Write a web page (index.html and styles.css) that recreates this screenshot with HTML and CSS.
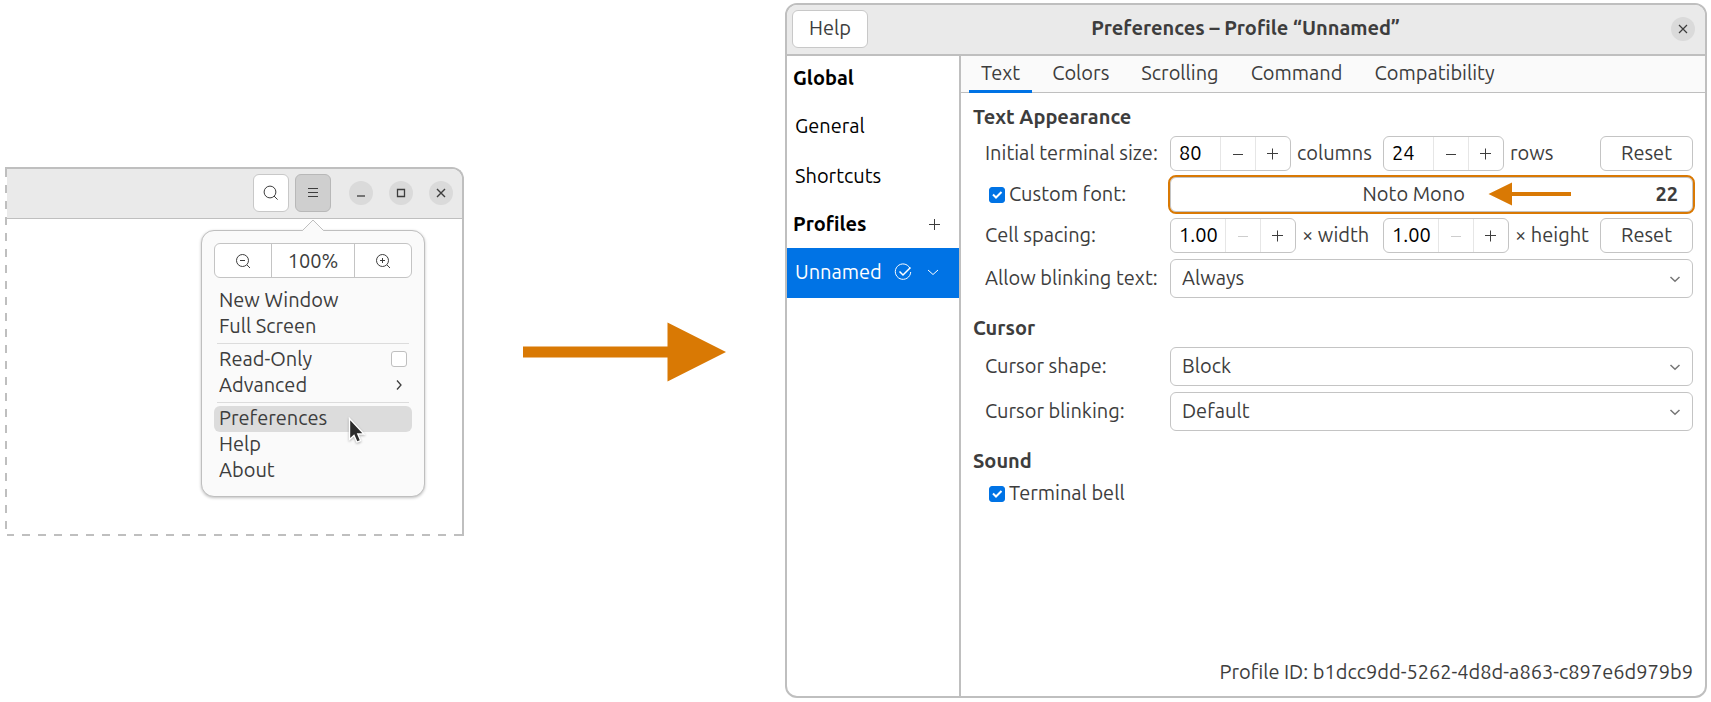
FILE: index.html
```html
<!DOCTYPE html>
<html lang="en">
<head>
<meta charset="utf-8">
<title>Terminal preferences</title>
<link rel="stylesheet" href="styles.css">
</head>
<body>
<main class="scene">
  <section class="terminal" aria-label="Terminal window">
    <header class="terminal-bar">
      <button class="tool" aria-label="Search">
        <svg width="16" height="16" viewBox="0 0 16 16"><circle cx="7" cy="7" r="5.9"/><path d="M11 11l3.6 3.6"/></svg>
      </button>
      <div class="menu-anchor">
        <button class="tool tool-active" aria-label="Menu">
          <svg width="16" height="16" viewBox="0 0 16 16"><path d="M3 3.5h10M3 7.5h10M3 11.5h10"/></svg>
        </button>
        <div class="popover">
          <svg class="popover-tip" width="24" height="13" viewBox="0 0 24 13"><path d="M1 12L12 1.5L23 12V13H1z" fill="#fafafa" stroke="none"/><path d="M0.5 11.5H1.5L12 1L22.5 11.5H23.5" stroke="#bfbfbf"/></svg>
          <div class="zoom">
            <button class="zoom-step" aria-label="Zoom out">
              <svg width="16" height="16" viewBox="0 0 16 16"><circle cx="7.5" cy="7.5" r="6"/><path d="M5 7.5h5M12 12l3 3"/></svg>
            </button>
            <button class="zoom-value">100%</button>
            <button class="zoom-step" aria-label="Zoom in">
              <svg width="16" height="16" viewBox="0 0 16 16"><circle cx="7.5" cy="7.5" r="6"/><path d="M5 7.5h5M7.5 5v5M12 12l3 3"/></svg>
            </button>
          </div>
          <button class="entry">New Window</button>
          <button class="entry">Full Screen</button>
          <hr class="rule">
          <label class="entry" for="read-only">Read-Only <input class="tick" type="checkbox" id="read-only"></label>
          <button class="entry">Advanced
            <svg class="entry-arrow" width="16" height="16" viewBox="0 0 16 16"><path d="M6 3.5L10 8L6 12.5"/></svg>
          </button>
          <hr class="rule">
          <button class="entry entry-hover">Preferences</button>
          <button class="entry">Help</button>
          <button class="entry">About</button>
          <svg class="pointer" width="18" height="28" viewBox="0 0 18 28"><path d="M1.5 1.5V22.5L6 18.5L9 25.2L12.6 23.6L9.8 17H16z" fill="#2b2b2b" stroke="#fff" stroke-width="1.4"/></svg>
        </div>
      </div>
      <div class="window-buttons">
        <button class="round" aria-label="Minimize"><svg width="12" height="12" viewBox="0 0 12 12"><path d="M2 9h8" stroke-width="1.3"/></svg></button>
        <button class="round" aria-label="Maximize"><svg width="12" height="12" viewBox="0 0 12 12"><path d="M2.5 2.5h7v7h-7z" stroke-width="1.3"/></svg></button>
        <button class="round" aria-label="Close"><svg width="12" height="12" viewBox="0 0 12 12"><path d="M2 2l8 8M10 2l-8 8" stroke-width="1.4"/></svg></button>
      </div>
    </header>
  </section>

  <svg class="big-arrow" width="204" height="60" viewBox="0 0 204 60"><path d="M0 24.5H144.500V0.500L203 30L144.500 59.500V35.500H0z" fill="#d97904" stroke="none"/></svg>

  <section class="prefs" aria-label="Preferences">
    <header class="prefs-bar">
      <button class="help">Help</button>
      <h1 class="title">Preferences – Profile “Unnamed”</h1>
      <button class="round" aria-label="Close"><svg width="12" height="12" viewBox="0 0 12 12"><path d="M2 2l8 8M10 2l-8 8" stroke-width="1.2"/></svg></button>
    </header>
    <div class="prefs-body">
      <nav class="side">
        <h2 class="side-head">Global</h2>
        <button class="side-item">General</button>
        <button class="side-item">Shortcuts</button>
        <div class="side-head side-profiles"><h2 class="side-title">Profiles</h2>
          <button class="bare" aria-label="Add profile"><svg width="16" height="16" viewBox="0 0 16 16"><path d="M8.500 3v11M3 8.500h11"/></svg></button>
        </div>
        <div class="side-item side-selected">
          <span>Unnamed</span>
          <svg width="18" height="18" viewBox="0 0 18 18"><path d="M15.900 5.200A7.700 7.700 0 1 0 16.700 9"/><path d="M5.500 8.500L9 12L16.500 4.500" stroke-width="1.500"/></svg>
          <button class="bare side-more" aria-label="Profile menu"><svg width="16" height="16" viewBox="0 0 16 16"><path d="M3 6l5 4.500L13 6"/></svg></button>
        </div>
      </nav>
      <div class="panel">
        <div class="tabs" role="tablist">
          <button class="tab tab-on" role="tab" aria-selected="true">Text</button>
          <button class="tab" role="tab">Colors</button>
          <button class="tab" role="tab">Scrolling</button>
          <button class="tab" role="tab">Command</button>
          <button class="tab" role="tab">Compatibility</button>
        </div>
        <div class="page">
          <h2 class="group">Text Appearance</h2>
          <div class="row">
            <label class="name" for="cols">Initial terminal size:</label>
            <div class="sizes">
              <div class="pair">
                <div class="spin"><input class="num" id="cols" type="text" inputmode="numeric" value="80"><button class="step" aria-label="Fewer columns"><svg width="16" height="16" viewBox="0 0 16 16"><path d="M3 8.500h10"/></svg></button><button class="step" aria-label="More columns"><svg width="16" height="16" viewBox="0 0 16 16"><path d="M7.500 2.500v11M2 7.500h11"/></svg></button></div>
                <label class="unit" for="cols">columns</label>
              </div>
              <div class="pair">
                <div class="spin"><input class="num" id="rows" type="text" inputmode="numeric" value="24"><button class="step" aria-label="Fewer rows"><svg width="16" height="16" viewBox="0 0 16 16"><path d="M3 8.500h10"/></svg></button><button class="step" aria-label="More rows"><svg width="16" height="16" viewBox="0 0 16 16"><path d="M7.500 2.500v11M2 7.500h11"/></svg></button></div>
                <label class="unit" for="rows">rows</label>
              </div>
              <button class="reset">Reset</button>
            </div>
          </div>
          <div class="row">
            <label class="name check" for="custom"><span class="box"><input class="tick" type="checkbox" id="custom" checked><svg class="mark" width="16" height="16" viewBox="0 0 16 16"><path d="M4 7.500L7 10.500L12.500 5"/></svg></span><span class="unit">Custom font:</span></label>
            <button class="font-button">
              <span class="font-name">Noto Mono<svg class="small-arrow" width="84" height="24" viewBox="0 0 84 24"><path d="M0.500 12L24 0.500V10H83V14H24V23.500z" fill="#d97904" stroke="none"/></svg></span>
              <b class="font-size">22</b>
            </button>
          </div>
          <div class="row">
            <label class="name" for="cellw">Cell spacing:</label>
            <div class="sizes">
              <div class="pair">
                <div class="spin"><input class="num num-wide" id="cellw" type="text" inputmode="decimal" value="1.00"><button class="step" disabled aria-label="Narrower"><svg width="16" height="16" viewBox="0 0 16 16"><path d="M3 8.500h10"/></svg></button><button class="step" aria-label="Wider"><svg width="16" height="16" viewBox="0 0 16 16"><path d="M7.500 2.500v11M2 7.500h11"/></svg></button></div>
                <label class="unit" for="cellw">× width</label>
              </div>
              <div class="pair">
                <div class="spin"><input class="num num-wide" id="cellh" type="text" inputmode="decimal" value="1.00"><button class="step" disabled aria-label="Shorter"><svg width="16" height="16" viewBox="0 0 16 16"><path d="M3 8.500h10"/></svg></button><button class="step" aria-label="Taller"><svg width="16" height="16" viewBox="0 0 16 16"><path d="M7.500 2.500v11M2 7.500h11"/></svg></button></div>
                <label class="unit" for="cellh">× height</label>
              </div>
              <button class="reset">Reset</button>
            </div>
          </div>
          <div class="row">
            <label class="name" for="blinktext">Allow blinking text:</label>
            <div class="combo"><select class="choice" id="blinktext"><option>Always</option></select><svg class="combo-arrow" width="16" height="16" viewBox="0 0 16 16"><path d="M3.500 6L8 10.300L12.500 6"/></svg></div>
          </div>
          <h2 class="group">Cursor</h2>
          <div class="row">
            <label class="name" for="shape">Cursor shape:</label>
            <div class="combo"><select class="choice" id="shape"><option>Block</option></select><svg class="combo-arrow" width="16" height="16" viewBox="0 0 16 16"><path d="M3.500 6L8 10.300L12.500 6"/></svg></div>
          </div>
          <div class="row">
            <label class="name" for="blink">Cursor blinking:</label>
            <div class="combo"><select class="choice" id="blink"><option>Default</option></select><svg class="combo-arrow" width="16" height="16" viewBox="0 0 16 16"><path d="M3.500 6L8 10.300L12.500 6"/></svg></div>
          </div>
          <h2 class="group">Sound</h2>
          <div class="row">
            <label class="name check" for="bell"><span class="box"><input class="tick" type="checkbox" id="bell" checked><svg class="mark" width="16" height="16" viewBox="0 0 16 16"><path d="M4 7.500L7 10.500L12.500 5"/></svg></span><span class="unit">Terminal bell</span></label>
          </div>
          <p class="profile-id">Profile ID: b1dcc9dd-5262-4d8d-a863-c897e6d979b9</p>
        </div>
      </div>
    </div>
  </section>
</main>
</body>
</html>
```

FILE: styles.css
```css
* { box-sizing: border-box; }

body {
  margin: 0;
  background: #fff;
  color: #3d3d3d;
  font-family: Ubuntu, "Noto Sans", sans-serif;
  font-size: 20px;
  line-height: 26px;
}

button, input, select {
  margin: 0;
  padding: 0;
  border: 0;
  background: none;
  color: inherit;
  font: inherit;
}

svg { display: block; flex: none; fill: none; stroke: #3d3d3d; }
h1, h2, p { margin: 0; font-size: inherit; }

.scene {
  display: grid;
  grid-template-columns: 459fr 321fr 922fr;
  align-items: center;
  min-height: 100vh;
  padding: 3px 4px 4px 5px;
}

/* Terminal window */
.terminal {
  min-height: 369px;
  margin-top: 2px;
  padding-left: 2px;
  border: 2px solid #bfbfbf;
  border-width: 2px 2px 0 0;
  border-radius: 0 12px 0 0;
  background:
    repeating-linear-gradient(to bottom, #bfbfbf 0 8px, #fff 8px 16px) left top / 2px 100% no-repeat,
    repeating-linear-gradient(to left, #bfbfbf 0 8px, #fff 8px 16px) left bottom / 100% 2px no-repeat;
}

.terminal-bar {
  display: flex;
  justify-content: flex-end;
  align-items: center;
  gap: 6px;
  height: 50px;
  padding: 0 9px 1px 0;
  border-bottom: 1px solid #bfbfbf;
  border-radius: 0 10px 0 0;
  background: #eaeaea;
}

.tool {
  display: grid;
  place-items: center;
  width: 36px;
  height: 38px;
  border: 1px solid #c8c8c8;
  border-radius: 6px;
  background: #fff;
}

.tool-active { border-color: #b8b8b8; background: #cfcfcf; }
.window-buttons { display: flex; gap: 16px; margin-left: 12px; }

.round {
  display: grid;
  place-items: center;
  width: 24px;
  height: 24px;
  border-radius: 50%;
  background: #dadada;
}

.menu-anchor { position: relative; }

.popover {
  position: absolute;
  top: 56px;
  left: -94px;
  display: flex;
  flex-direction: column;
  width: 224px;
  padding: 12px;
  border: 1px solid #bfbfbf;
  border-radius: 13px;
  background: #fafafa;
  box-shadow: 0 1px 3px rgba(0, 0, 0, 0.25);
}

.popover-tip { position: absolute; top: -12px; left: 99px; }

.zoom {
  display: flex;
  height: 35px;
  margin-bottom: 10px;
  border: 1px solid #c4c4c4;
  border-radius: 6px;
  background: #fff;
}

.zoom-step { display: grid; flex: 1; place-items: center; }
.zoom-value { width: 84px; border: 1px solid #c4c4c4; border-width: 0 1px; }

.entry {
  display: flex;
  justify-content: space-between;
  align-items: center;
  height: 26px;
  padding: 0 5px 2px;
  border-radius: 6px;
  text-align: left;
}

.entry-hover { background: #dcdcdc; }
.entry-arrow { stroke-width: 1.3; }
.rule { width: 192px; height: 1px; margin: 3px auto; border: 0; background: #dcdcdc; }
.pointer { position: absolute; top: 186px; left: 146px; filter: drop-shadow(0 1px 1px rgba(0, 0, 0, 0.3)); }

.tick {
  flex: none;
  appearance: none;
  width: 16px;
  height: 16px;
  border: 1px solid #bfbfbf;
  border-radius: 3px;
  background: #fff;
}

.tick:checked { border-color: #0073e5; background: #0073e5; }
.big-arrow { justify-self: center; margin-top: 2px; }

/* Preferences window */
.prefs {
  display: flex;
  flex-direction: column;
  align-self: stretch;
  overflow: hidden;
  border: 2px solid #bfbfbf;
  border-radius: 12px;
  background: #fff;
}

.prefs-bar {
  display: grid;
  grid-template-columns: 1fr auto 1fr;
  align-items: center;
  height: 51px;
  padding: 0 10px 2px 5px;
  border-bottom: 2px solid #bfbfbf;
  background: #eaeaea;
}

.prefs-bar .round { justify-self: end; }
.help { width: 76px; height: 38px; padding-bottom: 2px; border: 1px solid #c8c8c8; border-radius: 6px; background: #fff; }
.title { padding: 0 0 2px 4px; font-weight: bold; }
.prefs-body { display: flex; flex: 1; }

.side { flex: none; width: 174px; border-right: 2px solid #bfbfbf; color: #000; }
.side-head { display: flex; align-items: center; height: 45px; padding: 0 0 2px 6px; font-weight: bold; }
.side-title { flex: 1; }
.side-profiles { height: 47px; padding-right: 17px; }

.side-item {
  display: flex;
  align-items: center;
  width: 100%;
  height: 50px;
  padding: 0 18px 0 8px;
  text-align: left;
}

.side-selected { gap: 12px; padding-bottom: 2px; background: #0073e5; color: #fff; }
.side-selected svg { stroke: #fff; }
.side-more { margin-left: auto; }

.panel { display: flex; flex: 1; flex-direction: column; min-width: 0; }

.tabs {
  display: flex;
  gap: 8px;
  height: 37px;
  padding-left: 8px;
  border-bottom: 1px solid #bfbfbf;
  background: #fafafa;
}

.tab { height: 37px; padding: 0 12px; border-bottom: 3px solid transparent; }
.tab-on { border-color: #0073e5; }

.page { display: flex; flex: 1; flex-direction: column; gap: 6px; padding: 11px 12px 11px 12px; }
.group { height: 26px; font-weight: bold; }
.row + .group { margin-top: 11px; }
.row { display: grid; grid-template-columns: 185px 1fr; align-items: center; padding-left: 12px; }
.name { padding-bottom: 2px; white-space: nowrap; }
.check { display: flex; align-items: center; gap: 4px; padding: 0 0 0 4px; }
.unit { padding-bottom: 2px; }
.box { display: grid; }
.box > * { grid-area: 1 / 1; }
.mark { stroke: #fff; stroke-width: 2; pointer-events: none; }

.sizes { display: grid; grid-template-columns: 213px 1fr 93px; align-items: center; }
.pair { display: flex; align-items: center; gap: 6px; white-space: nowrap; }

.spin { display: flex; height: 35px; border: 1px solid #c4c4c4; border-radius: 6px; background: #fff; }
.num { width: 49px; padding: 0 0 2px 8px; color: #000; outline: 0; }
.num-wide { width: 54px; }
.step { display: grid; place-items: center; width: 35px; border-left: 1px solid #e6e6e6; }
.step:disabled svg { opacity: 0.25; }
.reset { height: 35px; padding-bottom: 2px; border: 1px solid #c4c4c4; border-radius: 6px; background: #fff; }

.font-button {
  display: grid;
  grid-template-columns: 1fr auto;
  column-gap: 13px;
  align-items: center;
  height: 35px;
  padding: 0 14px 2px;
  border: 1px solid #c4c4c4;
  border-radius: 6px;
  background: #fff;
  outline: 2px solid #d97904;
}

.font-name { position: relative; justify-self: center; }
.small-arrow { position: absolute; top: 1px; left: 125px; }

.combo { display: grid; align-items: center; }
.combo > * { grid-area: 1 / 1; }
.choice {
  appearance: none;
  height: 39px;
  padding: 0 40px 2px 11px;
  border: 1px solid #c4c4c4;
  border-radius: 6px;
  background: #fff;
}
.combo-arrow { justify-self: end; margin-right: 10px; pointer-events: none; stroke: #777; stroke-width: 1.5; }

.profile-id { margin-top: auto; text-align: right; }
```
